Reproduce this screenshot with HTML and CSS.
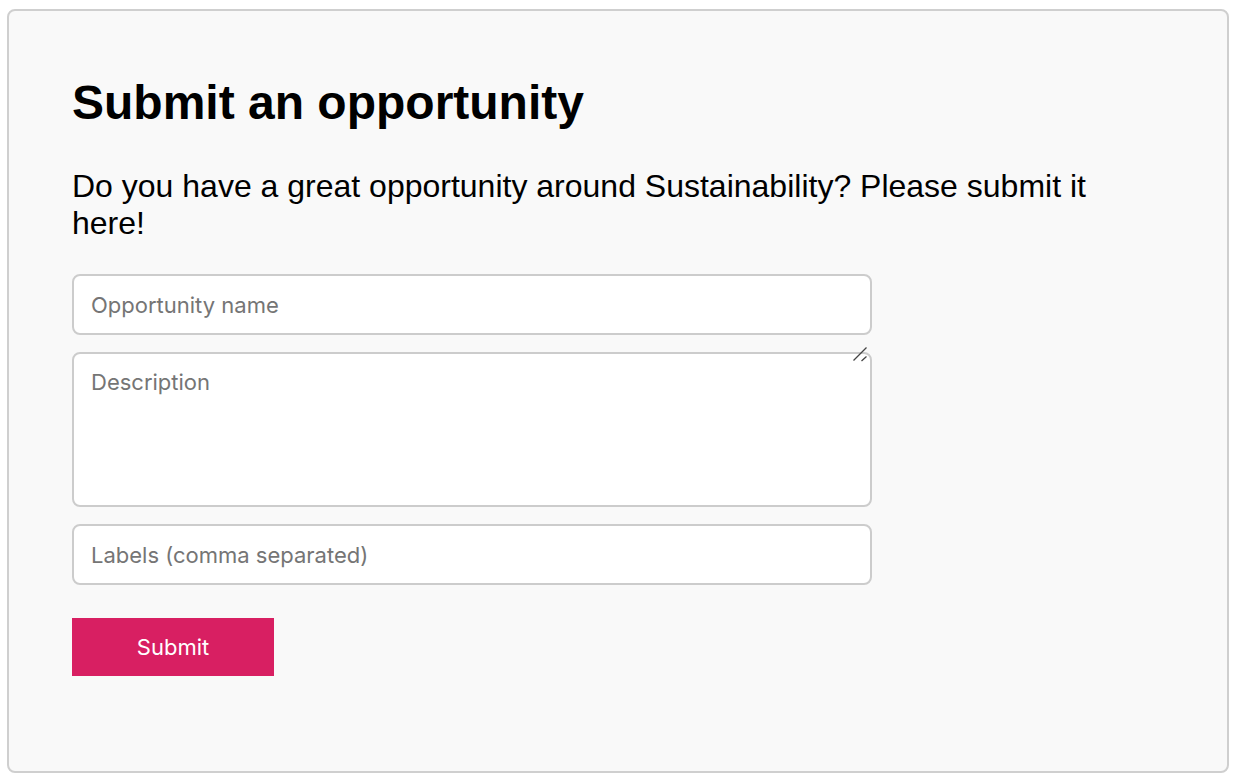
FILE: index.html
```html
<!DOCTYPE html>
<html lang="en">
<head>
<meta charset="utf-8">
<title>Submit an opportunity</title>
<link rel="stylesheet" href="styles.css">
</head>
<body>
<main class="card">
  <h1 class="title">Submit an opportunity</h1>
  <p class="intro">Do you have a great opportunity around Sustainability? Please submit it here!</p>
  <form class="form">
    <input class="field" type="text" placeholder="Opportunity name">
    <div class="area-wrap">
      <textarea class="field area" placeholder="Description"></textarea>
      <svg class="grip" width="16" height="16" viewBox="0 0 16 16"><path d="M1.5 14.5 L14.5 1.5 M9.5 15 L14.5 10.5" stroke="#444" stroke-width="1.3" fill="none"/></svg>
    </div>
    <input class="field" type="text" placeholder="Labels (comma separated)">
    <button class="submit" type="button">Submit</button>
  </form>
</main>
</body>
</html>
```

FILE: styles.css
```css
* { box-sizing: border-box; }
html, body { margin: 0; background: #fff; }
body { padding: 9px 9px 9px 7px; font-family: "Liberation Sans", Arial, sans-serif; }
.card {
  height: 764px;
  border: 2px solid #cfcfcf;
  border-radius: 8px;
  background: #f9f9f9;
  padding: 64px 63px;
}
.title {
  margin: 0;
  font-size: 48px;
  font-weight: 700;
  line-height: 56px;
  color: #000;
}
.intro {
  margin: 37px 0 0;
  font-size: 32px;
  line-height: 37px;
  color: #000;
}
.form {
  margin-top: 32px;
  display: flex;
  flex-direction: column;
  align-items: flex-start;
  gap: 17px;
}
.field {
  width: 800px;
  height: 61px;
  border: 2px solid #cccccc;
  border-radius: 8px;
  background: #fff;
  padding: 0 17px;
  font-family: Inter, "Noto Sans", sans-serif;
  font-size: 22px;
  color: #333;
  outline: none;
}
.field::placeholder { color: #757575; }
.area-wrap { position: relative; }
.area {
  display: block;
  height: 155px;
  resize: none;
  padding: 15px 17px;
  line-height: 26px;
}
.grip { position: absolute; right: 4px; top: -6px; }
.submit {
  margin-top: 16px;
  width: 202px;
  height: 58px;
  border: 0;
  background: #d81f62;
  color: #fff;
  font-family: Inter, "Noto Sans", sans-serif;
  font-size: 22px;
  cursor: pointer;
}
```
